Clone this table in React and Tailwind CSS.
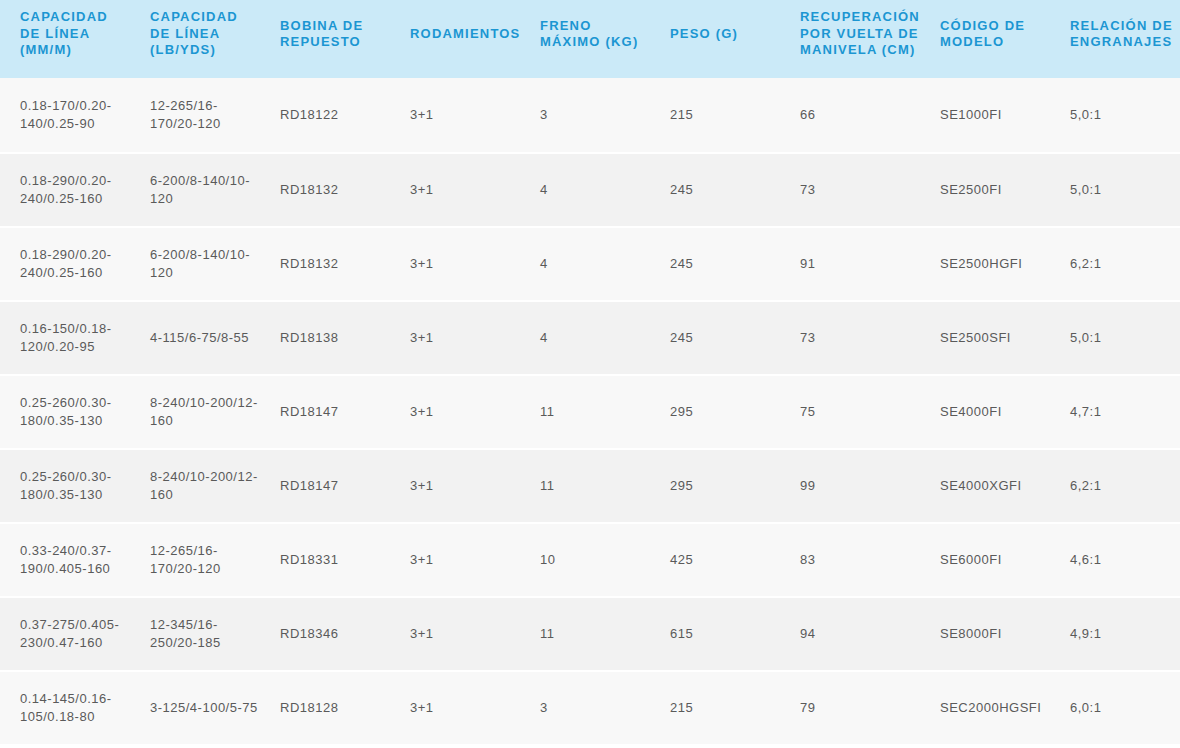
const headers = [
  "Capacidad de línea (mm/m)",
  "Capacidad de línea (lb/yds)",
  "Bobina de repuesto",
  "Rodamientos",
  "Freno máximo (kg)",
  "Peso (g)",
  "Recuperación por vuelta de manivela (cm)",
  "Código de modelo",
  "Relación de engranajes",
];

const rows = [
  ["0.18-170/0.20-140/0.25-90", "12-265/16-170/20-120", "RD18122", "3+1", "3", "215", "66", "SE1000FI", "5,0:1"],
  ["0.18-290/0.20-240/0.25-160", "6-200/8-140/10-120", "RD18132", "3+1", "4", "245", "73", "SE2500FI", "5,0:1"],
  ["0.18-290/0.20-240/0.25-160", "6-200/8-140/10-120", "RD18132", "3+1", "4", "245", "91", "SE2500HGFI", "6,2:1"],
  ["0.16-150/0.18-120/0.20-95", "4-115/6-75/8-55", "RD18138", "3+1", "4", "245", "73", "SE2500SFI", "5,0:1"],
  ["0.25-260/0.30-180/0.35-130", "8-240/10-200/12-160", "RD18147", "3+1", "11", "295", "75", "SE4000FI", "4,7:1"],
  ["0.25-260/0.30-180/0.35-130", "8-240/10-200/12-160", "RD18147", "3+1", "11", "295", "99", "SE4000XGFI", "6,2:1"],
  ["0.33-240/0.37-190/0.405-160", "12-265/16-170/20-120", "RD18331", "3+1", "10", "425", "83", "SE6000FI", "4,6:1"],
  ["0.37-275/0.405-230/0.47-160", "12-345/16-250/20-185", "RD18346", "3+1", "11", "615", "94", "SE8000FI", "4,9:1"],
  ["0.14-145/0.16-105/0.18-80", "3-125/4-100/5-75", "RD18128", "3+1", "3", "215", "79", "SEC2000HGSFI", "6,0:1"],
];

const cols = "grid grid-cols-[130px_130px_130px_130px_130px_130px_140px_130px_130px]";

export default function App() {
  return (
    <div className="w-[1180px] h-[748px] overflow-hidden bg-white font-['Liberation_Sans',Arial,sans-serif]">
      {/* header */}
      <div className={`${cols} h-[78px] bg-[#cbeaf8]`}>
        {headers.map((h) => (
          <div key={h} className="flex items-center pl-5 pb-[10px] text-[13px] leading-[16.5px] font-bold uppercase tracking-[1.2px] text-[#1b96d2]">
            {h}
          </div>
        ))}
      </div>

      {/* rows */}
      {rows.map((r, i) => (
        <div
          key={i}
          className={`${cols} border-b-2 border-white ${i === 0 ? "h-[76px]" : "h-[74px]"} ${i % 2 === 0 ? "bg-[#f8f8f8]" : "bg-[#f2f2f2]"}`}
        >
          {r.map((c, j) => (
            <div key={j} className="flex items-center pl-5 text-[13px] leading-[18px] tracking-[0.5px] text-[#5a5a5a]">
              <span>{c}</span>
            </div>
          ))}
        </div>
      ))}
    </div>
  );
}
